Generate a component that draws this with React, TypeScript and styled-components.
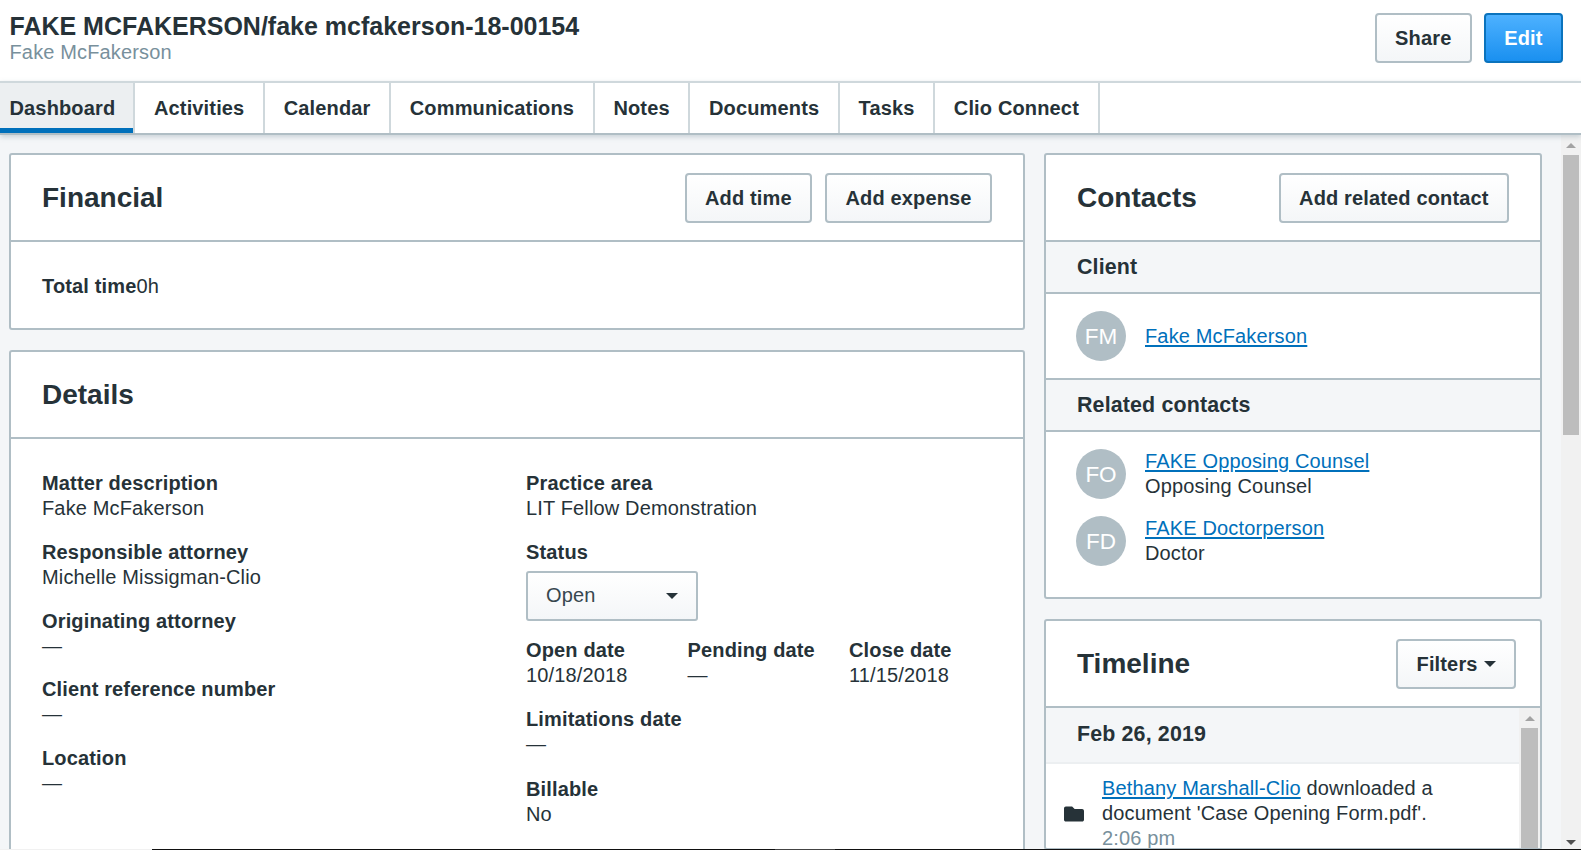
import React from 'react';
import styled, {createGlobalStyle} from 'styled-components';
import {FaFolder} from 'react-icons/fa';

const GlobalStyle = createGlobalStyle`
    html, body {
        margin: 0;
        padding: 0;
        height: 100%;
        overflow: hidden;
    }
    body {
        font-family: 'Liberation Sans', Arial, sans-serif;
        font-size: 20px;
        line-height: 25px;
        letter-spacing: 0.15px;
        color: #263238;
    }
    * {
        box-sizing: border-box;
    }
`;

const Page = styled.div`
    position: relative;
    display: flex;
    flex-direction: column;
    height: 850px;
    overflow: hidden;
    background: #fff;
`;

const Header = styled.header`
    display: flex;
    justify-content: space-between;
    flex: none;
    height: 81px;
    padding: 13px 18px 0 9.5px;
`;

const TitleBlock = styled.div`
    display: flex;
    flex-direction: column;
`;

const Title = styled.h1`
    margin: 0;
    font-size: 25px;
    line-height: 27px;
    font-weight: 700;
    letter-spacing: 0;
`;

const Subtitle = styled.div`
    color: #78909c;
    line-height: 25px;
`;

const HeaderActions = styled.div`
    display: flex;
    gap: 12px;
    align-items: flex-start;
`;

const Button = styled.button<{$primary?: boolean}>`
    height: 50px;
    padding: 1px 18.4px 0;
    border: 2px solid ${(props) => (props.$primary ? '#0b73bd' : '#b0bec5')};
    border-radius: 4px;
    background: ${(props) => (props.$primary ? 'linear-gradient(#4db1ff, #1a90f0)' : 'linear-gradient(#fff, #f4f6f8)')};
    color: ${(props) => (props.$primary ? '#fff' : '#263238')};
    font-family: inherit;
    font-size: 20px;
    font-weight: 700;
    letter-spacing: 0.15px;
    display: inline-flex;
    align-items: center;
    gap: 6px;
`;

const Caret = styled.span<{$size: number}>`
    display: inline-block;
    width: 0;
    height: 0;
    border-left: ${(props) => props.$size}px solid transparent;
    border-right: ${(props) => props.$size}px solid transparent;
    border-top: ${(props) => props.$size}px solid #263238;
`;

const Tabs = styled.nav`
    display: flex;
    flex: none;
    height: 54px;
    border-top: 2px solid #cfd8dc;
    border-bottom: 2px solid #b0bec5;
    box-shadow: 0 2px 5px rgba(120, 144, 156, 0.35);
    position: relative;
    z-index: 1;
`;

const Tab = styled.div<{$active?: boolean}>`
    display: flex;
    align-items: center;
    padding: 0 18.65px;
    border-right: 2px solid #cfd8dc;
    font-weight: 700;
    white-space: nowrap;

    ${(props) => props.$active && `
        padding-left: 9.5px;
        padding-right: 18px;
        background: #eceff1;
        box-shadow: inset 0 -5px 0 #0070bb;
    `}
`;

const Main = styled.div`
    display: flex;
    flex: 1;
    min-height: 0;
`;

const Content = styled.main`
    flex: 1;
    min-width: 0;
    display: grid;
    grid-template-columns: 1016px 498px;
    column-gap: 19px;
    align-items: start;
    padding: 18px 0 0 9px;
    background: #f4f6f8;
    overflow: hidden;
`;

const Column = styled.div`
    display: flex;
    flex-direction: column;
    gap: 20px;
`;

const Panel = styled.section`
    background: #fff;
    border: 2px solid #b0bec5;
    border-radius: 3px;
`;

const PanelHeader = styled.div<{$right?: number}>`
    display: flex;
    align-items: center;
    justify-content: space-between;
    height: 87px;
    padding: 0 ${(props) => props.$right ?? 31}px 0 31px;
    border-bottom: 2px solid #b0bec5;
`;

const PanelTitle = styled.h2`
    margin: 0;
    font-size: 28px;
    line-height: 31px;
    font-weight: 700;
    letter-spacing: 0;
`;

const PanelActions = styled.div`
    display: flex;
    gap: 13px;
`;

const FinancialBody = styled.div`
    padding: 32px 31px 29px;
`;

const Label = styled.div`
    font-weight: 700;
`;

const InlineLabel = styled.strong`
    font-weight: 700;
`;

const DetailsBody = styled.div`
    display: grid;
    grid-template-columns: 484px 1fr;
    padding: 32px 31px 40px;
`;

const Field = styled.div<{$gap?: number}>`
    margin-bottom: ${(props) => props.$gap ?? 18.75}px;
`;

const Select = styled.div`
    display: flex;
    align-items: center;
    justify-content: space-between;
    width: 172px;
    height: 50px;
    margin-top: 6px;
    padding: 0 18px;
    border: 2px solid #b0bec5;
    border-radius: 3px;
    background: linear-gradient(#fff, #f4f6f8);
    color: #37474f;
`;

const DateRow = styled.div`
    display: grid;
    grid-template-columns: repeat(3, 161.5px);
`;

const Band = styled.div`
    display: flex;
    align-items: center;
    height: 52px;
    padding: 0 31px;
    background: #f4f6f8;
    border-bottom: 2px solid #b0bec5;
    font-size: 21.4px;
    font-weight: 700;
`;

const ContactList = styled.div<{$last?: boolean}>`
    display: flex;
    flex-direction: column;
    gap: 17px;
    padding: ${(props) => (props.$last ? '17px 30px 31px 30px' : '17px 30px 17px 30px')};
    border-bottom: ${(props) => (props.$last ? 'none' : '2px solid #b0bec5')};
`;

const ContactRow = styled.div`
    display: flex;
    align-items: center;
    gap: 19px;
`;

const Avatar = styled.div`
    flex: none;
    display: flex;
    align-items: center;
    justify-content: center;
    width: 50px;
    height: 50px;
    border-radius: 50%;
    background: #b0bec5;
    color: #fff;
    font-size: 22.5px;
    letter-spacing: 0;
`;

const Link = styled.a`
    color: #0070bb;
    text-decoration: underline;
    text-decoration-thickness: 2px;
    text-underline-offset: 2px;
`;

const ContactName = styled.div`
    display: flex;
    flex-direction: column;
`;

const TimelineBody = styled.div`
    display: flex;
    height: 140px;
    overflow: hidden;
`;

const TimelineFeed = styled.div`
    flex: 1;
    min-width: 0;
`;

const DateBand = styled.div`
    display: flex;
    align-items: center;
    height: 56px;
    padding: 0 31px 1px;
    background: #f4f6f8;
    border-bottom: 2px solid #eceff1;
    font-size: 21.4px;
    font-weight: 700;
`;

const TimelineItem = styled.div`
    display: flex;
    align-items: center;
    gap: 18px;
    padding: 12px 30px 0 18px;
`;

const Time = styled.div`
    color: #78909c;
`;

const ScrollTrack = styled.div<{$width: number; $pad: number}>`
    flex: none;
    display: flex;
    flex-direction: column;
    align-items: center;
    width: ${(props) => props.$width}px;
    padding: 0 ${(props) => props.$pad}px 0;
    background: #f1f1f1;
`;

const ScrollArrowUp = styled.span`
    flex: none;
    width: 0;
    height: 0;
    margin: 8px 0 7px;
    border-left: 5px solid transparent;
    border-right: 5px solid transparent;
    border-bottom: 5px solid #a3a3a3;
`;

const ScrollThumb = styled.div<{$height: number}>`
    flex: none;
    align-self: stretch;
    height: ${(props) => props.$height}px;
    background: #bdbdbd;
`;

const ScrollArrowDown = styled.span`
    flex: none;
    width: 0;
    height: 0;
    margin-top: auto;
    margin-bottom: 5px;
    border-left: 5px solid transparent;
    border-right: 5px solid transparent;
    border-top: 5px solid #505050;
`;

const BottomLine = styled.div`
    position: absolute;
    left: 0;
    right: 0;
    bottom: 0;
    height: 1px;
    background: linear-gradient(to right, #f1f1f1 152px, #111 152px, #111 775px, #444 775px, #444 835px, #111 835px);
`;

const leftFields = [
    {label: 'Matter description', value: 'Fake McFakerson'},
    {label: 'Responsible attorney', value: 'Michelle Missigman-Clio'},
    {label: 'Originating attorney', value: '—'},
    {label: 'Client reference number', value: '—'},
    {label: 'Location', value: '—'},
];

const dates = [
    {label: 'Open date', value: '10/18/2018'},
    {label: 'Pending date', value: '—'},
    {label: 'Close date', value: '11/15/2018'},
];

const tabs = ['Dashboard', 'Activities', 'Calendar', 'Communications', 'Notes', 'Documents', 'Tasks', 'Clio Connect'];

const App = () => (
    <Page>
        <GlobalStyle/>
        <Header>
            <TitleBlock>
                <Title>{'FAKE MCFAKERSON/fake mcfakerson-18-00154'}</Title>
                <Subtitle>{'Fake McFakerson'}</Subtitle>
            </TitleBlock>
            <HeaderActions>
                <Button>{'Share'}</Button>
                <Button $primary={true}>{'Edit'}</Button>
            </HeaderActions>
        </Header>
        <Tabs>
            {tabs.map((tab) => (
                <Tab
                    key={tab}
                    $active={tab === 'Dashboard'}
                >
                    {tab}
                </Tab>
            ))}
        </Tabs>
        <Main>
            <Content>
                <Column>
                    <Panel>
                        <PanelHeader>
                            <PanelTitle>{'Financial'}</PanelTitle>
                            <PanelActions>
                                <Button>{'Add time'}</Button>
                                <Button>{'Add expense'}</Button>
                            </PanelActions>
                        </PanelHeader>
                        <FinancialBody>
                            <InlineLabel>{'Total time'}</InlineLabel>{'0h'}
                        </FinancialBody>
                    </Panel>
                    <Panel>
                        <PanelHeader>
                            <PanelTitle>{'Details'}</PanelTitle>
                        </PanelHeader>
                        <DetailsBody>
                            <div>
                                {leftFields.map((field) => (
                                    <Field key={field.label}>
                                        <Label>{field.label}</Label>
                                        <div>{field.value}</div>
                                    </Field>
                                ))}
                            </div>
                            <div>
                                <Field>
                                    <Label>{'Practice area'}</Label>
                                    <div>{'LIT Fellow Demonstration'}</div>
                                </Field>
                                <Field $gap={17}>
                                    <Label>{'Status'}</Label>
                                    <Select>
                                        {'Open'}
                                        <Caret $size={6}/>
                                    </Select>
                                </Field>
                                <Field $gap={19.5}>
                                    <DateRow>
                                        {dates.map((date) => (
                                            <div key={date.label}>
                                                <Label>{date.label}</Label>
                                                <div>{date.value}</div>
                                            </div>
                                        ))}
                                    </DateRow>
                                </Field>
                                <Field $gap={19.5}>
                                    <Label>{'Limitations date'}</Label>
                                    <div>{'—'}</div>
                                </Field>
                                <Field>
                                    <Label>{'Billable'}</Label>
                                    <div>{'No'}</div>
                                </Field>
                            </div>
                        </DetailsBody>
                    </Panel>
                </Column>
                <Column>
                    <Panel>
                        <PanelHeader>
                            <PanelTitle>{'Contacts'}</PanelTitle>
                            <Button>{'Add related contact'}</Button>
                        </PanelHeader>
                        <Band>{'Client'}</Band>
                        <ContactList>
                            <ContactRow>
                                <Avatar>{'FM'}</Avatar>
                                <Link href='#'>{'Fake McFakerson'}</Link>
                            </ContactRow>
                        </ContactList>
                        <Band>{'Related contacts'}</Band>
                        <ContactList $last={true}>
                            <ContactRow>
                                <Avatar>{'FO'}</Avatar>
                                <ContactName>
                                    <div><Link href='#'>{'FAKE Opposing Counsel'}</Link></div>
                                    <div>{'Opposing Counsel'}</div>
                                </ContactName>
                            </ContactRow>
                            <ContactRow>
                                <Avatar>{'FD'}</Avatar>
                                <ContactName>
                                    <div><Link href='#'>{'FAKE Doctorperson'}</Link></div>
                                    <div>{'Doctor'}</div>
                                </ContactName>
                            </ContactRow>
                        </ContactList>
                    </Panel>
                    <Panel>
                        <PanelHeader $right={24}>
                            <PanelTitle>{'Timeline'}</PanelTitle>
                            <Button>
                                {'Filters'}
                                <Caret $size={6}/>
                            </Button>
                        </PanelHeader>
                        <TimelineBody>
                            <TimelineFeed>
                                <DateBand>{'Feb 26, 2019'}</DateBand>
                                <TimelineItem>
                                    <FaFolder
                                        size={20}
                                        style={{flex: 'none'}}
                                    />
                                    <div>
                                        <div><Link href='#'>{'Bethany Marshall-Clio'}</Link>{' downloaded a'}</div>
                                        <div>{"document 'Case Opening Form.pdf'."}</div>
                                        <Time>{'2:06 pm'}</Time>
                                    </div>
                                </TimelineItem>
                            </TimelineFeed>
                            <ScrollTrack
                                $width={21}
                                $pad={2}
                            >
                                <ScrollArrowUp/>
                                <ScrollThumb $height={120}/>
                            </ScrollTrack>
                        </TimelineBody>
                    </Panel>
                </Column>
            </Content>
            <ScrollTrack
                $width={20}
                $pad={2}
            >
                <ScrollArrowUp/>
                <ScrollThumb $height={280}/>
                <ScrollArrowDown/>
            </ScrollTrack>
        </Main>
        <BottomLine/>
    </Page>
);

export default App;
